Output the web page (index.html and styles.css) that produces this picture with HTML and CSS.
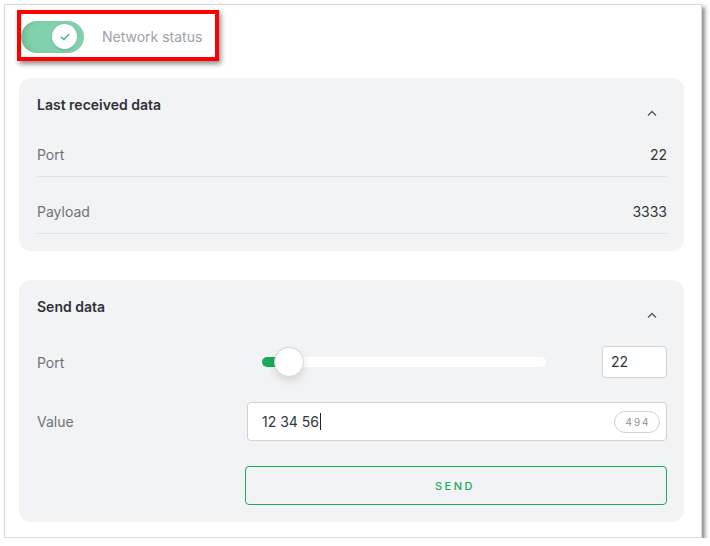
FILE: index.html
```html
<!DOCTYPE html>
<html>
<head>
<meta charset="utf-8">
<link rel="stylesheet" href="styles.css">
</head>
<body>
<div class="panel">
  <div class="status-box">
    <div class="toggle">
      <div class="knob">
        <svg width="12" height="12" viewBox="0 0 12 12"><path d="M2.3 6.2 L4.9 8.6 L9.7 3.6" fill="none" stroke="#3cb97f" stroke-width="1.4" stroke-linecap="round" stroke-linejoin="round"/></svg>
      </div>
    </div>
    <span class="status-label">Network status</span>
  </div>

  <section class="card card-received">
    <div class="card-head">
      <h2 class="card-title">Last received data</h2>
      <svg class="chev" width="12" height="8" viewBox="0 0 12 8"><path d="M2 6.5 L6 2.5 L10 6.5" fill="none" stroke="#5a5e66" stroke-width="1.5"/></svg>
    </div>
    <div class="data-row"><span class="label">Port</span><span class="value">22</span></div>
    <div class="data-row"><span class="label">Payload</span><span class="value">3333</span></div>
  </section>

  <section class="card card-send">
    <div class="card-head">
      <h2 class="card-title">Send data</h2>
      <svg class="chev" width="12" height="8" viewBox="0 0 12 8"><path d="M2 6.5 L6 2.5 L10 6.5" fill="none" stroke="#5a5e66" stroke-width="1.5"/></svg>
    </div>
    <div class="form-row port-row">
      <span class="label">Port</span>
      <div class="port-controls">
        <div class="slider">
          <div class="slider-fill"></div>
          <div class="slider-knob"></div>
        </div>
        <div class="num-input">22</div>
      </div>
    </div>
    <div class="form-row value-row">
      <span class="label">Value</span>
      <div class="text-input">
        <span class="text-value">12 34 56<span class="caret"></span></span>
        <span class="counter">494</span>
      </div>
    </div>
    <div class="button-row">
      <button class="send-btn">SEND</button>
    </div>
  </section>
</div>
</body>
</html>
```

FILE: styles.css
```css
* { box-sizing: border-box; }
html, body { margin: 0; padding: 0; background: #ffffff; }
body {
  font-family: Inter, "Noto Sans", "Liberation Sans", sans-serif;
  font-size: 14px;
  color: #333;
}
.panel {
  margin: 4px 0 0 4px;
  width: 698px;
  height: 534px;
  background: #fff;
  border: 1px solid #dcdcdc;
  box-shadow: 3px 3px 4px rgba(0,0,0,0.45);
  padding: 5px 0 0 12px;
}
.status-box {
  width: 202px;
  height: 51px;
  border: 4px solid #ff0000;
  box-shadow: 2px 3px 5px rgba(0,0,0,0.45);
  display: flex;
  align-items: center;
  padding-top: 2px;
}
.toggle {
  width: 63px;
  height: 32px;
  border-radius: 16px;
  background: #80d1ac;
  display: flex;
  align-items: center;
  justify-content: flex-end;
  padding-right: 7px;
  box-shadow: inset 6px 0 6px -4px rgba(60,120,90,0.35);
}
.knob {
  width: 25px;
  height: 25px;
  border-radius: 50%;
  background: #fff;
  display: flex;
  align-items: center;
  justify-content: center;
  box-shadow: 0 1px 3px rgba(0,0,0,0.15);
}
.status-label {
  margin-left: 18px;
  color: #9ca1aa;
  font-size: 14px;
}
.card {
  width: 665px;
  margin-left: 2px;
  background: #f2f3f5;
  border-radius: 12px;
  padding: 0 17px 17px 18px;
}
.card-received { margin-top: 17px; }
.card-send { margin-top: 29px; }
.card-head {
  display: flex;
  justify-content: space-between;
  align-items: flex-start;
  height: 42px;
  padding-top: 17px;
}
.card-title {
  margin: 0;
  font-size: 14px;
  font-weight: 600;
  color: #2f3237;
  line-height: 20px;
}
.chev { margin-top: 14px; margin-right: 9px; }
.data-row {
  display: flex;
  justify-content: space-between;
  align-items: center;
  height: 57px;
  padding-top: 13px;
  border-bottom: 1px solid #dfe1e4;
}
.label { color: #6e7279; }
.value { color: #33363b; }

.form-row {
  display: grid;
  grid-template-columns: 210px 1fr;
  align-items: center;
}
.port-row { height: 40px; margin-top: 20px; }
.port-controls {
  display: flex;
  align-items: center;
  justify-content: space-between;
}
.slider {
  position: relative;
  margin-left: 15px;
  width: 284px;
  height: 10px;
  border-radius: 5px;
  background: #fff;
}
.slider-fill {
  position: absolute;
  left: 0; top: 0;
  width: 22px;
  height: 10px;
  border-radius: 5px;
  background: #1aaa5a;
}
.slider-knob {
  position: absolute;
  left: 12px;
  top: -10px;
  width: 30px;
  height: 30px;
  border-radius: 50%;
  background: #fff;
  border: 1px solid #d6d6d6;
  box-shadow: 0 4px 8px rgba(0,0,0,0.12);
}
.num-input {
  width: 65px;
  height: 32px;
  background: #fff;
  border: 1px solid #cfd1d4;
  border-radius: 4px;
  padding-left: 8px;
  line-height: 30px;
  color: #33363b;
}
.value-row { margin-top: 20px; }
.text-input {
  height: 39px;
  background: #fff;
  border: 1px solid #cfd1d4;
  border-radius: 4px;
  display: flex;
  align-items: center;
  justify-content: space-between;
  padding: 0 6px 0 14px;
}
.text-value { color: #33363b; display: flex; align-items: center; }
.caret {
  display: inline-block;
  width: 1px;
  height: 17px;
  background: #222;
  margin-left: 1px;
}
.counter {
  border: 1px solid #cfd1d4;
  border-radius: 11px;
  height: 22px;
  width: 46px;
  font-size: 10px;
  letter-spacing: 2px;
  color: #8d9198;
  display: flex;
  align-items: center;
  justify-content: center;
  padding-left: 2px;
}
.button-row { margin-top: 25px; padding-left: 208px; }
.send-btn {
  width: 422px;
  height: 39px;
  background: transparent;
  border: 1px solid #1aaa5a;
  border-radius: 4px;
  color: #1aaa5a;
  font-family: Inter, "Noto Sans", sans-serif;
  font-size: 11px;
  font-weight: 500;
  letter-spacing: 2.5px;
  padding-left: 4px;
}
```
